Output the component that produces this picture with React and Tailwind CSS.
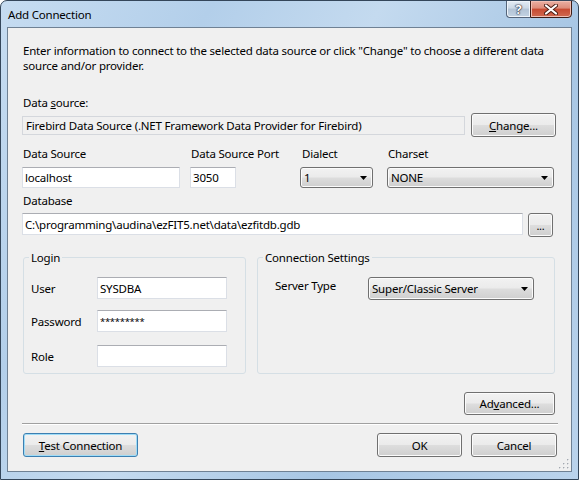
import React from "react";

function Btn({ children, className = "", def = false }) {
  const base =
    "flex items-center justify-center rounded-[3px] border bg-[linear-gradient(to_bottom,#f2f2f2_0%,#ebebeb_48%,#dddddd_52%,#cfcfcf_100%)] leading-[15px] ";
  const edge = def
    ? "border-[#3c7fb1] shadow-[inset_0_0_0_1px_#9fdcf7] "
    : "border-[#707070] shadow-[inset_0_0_0_1px_#fbfbfb] ";
  return <div className={base + edge + className}>{children}</div>;
}

function Field({ children, className = "" }) {
  return (
    <div
      className={
        "flex items-center border border-[#dbdfe6] border-t-[#abadb3] bg-white pl-[2px] leading-[15px] " +
        className
      }
    >
      {children}
    </div>
  );
}

function Arrow() {
  return (
    <svg width="7" height="4" viewBox="0 0 7 4" className="shrink-0">
      <path d="M0 0H7L3.5 4Z" fill="#000" />
    </svg>
  );
}

function Combo({ children, className = "" }) {
  return (
    <div
      className={
        "flex items-center justify-between rounded-[3px] border border-[#707070] bg-[linear-gradient(to_bottom,#f2f2f2_0%,#ebebeb_48%,#dddddd_52%,#cfcfcf_100%)] shadow-[inset_0_0_0_1px_#fbfbfb] pl-[3px] pr-[5px] leading-[15px] " +
        className
      }
    >
      <span>{children}</span>
      <Arrow />
    </div>
  );
}

export default function App() {
  return (
    <div className="relative flex h-[480px] w-[579px] flex-col overflow-hidden rounded-t-[7px] border border-[#34465a] bg-[linear-gradient(120deg,#c6dcf1_0%,#b3cfea_25%,#c4daef_45%,#a7c6e4_70%,#bad3ec_100%)] font-['Noto_Sans',sans-serif] text-[11.5px] tracking-[-0.2px] text-black">
      {/* title bar */}
      <div className="flex h-[26px] shrink-0 items-start">
        <div className="ml-[7px] mt-[6px] leading-[15px] text-[#000]">Add Connection</div>
        <div className="ml-auto mr-[6px] -mt-px flex">
          <div className="flex h-[18px] w-[24px] items-center justify-center rounded-bl-[4px] border border-r-0 border-[#55657a] bg-[linear-gradient(to_bottom,#e4ecf4_0%,#cbd8e5_45%,#b2c3d5_50%,#c3d3e3_100%)] shadow-[inset_0_0_0_1px_#eef4fa]">
            <span className="text-[13px] font-bold leading-none text-white [text-shadow:0_0_1px_#223,0_0_1px_#223,0_0_2px_#334]">?</span>
          </div>
          <div className="flex h-[18px] w-[42px] items-center justify-center rounded-br-[4px] border border-[#3e1d17] bg-[linear-gradient(to_bottom,#eab0a3_0%,#dd8c7a_45%,#c74a31_50%,#d06a51_100%)] shadow-[inset_0_0_0_1px_#f0bfb4]">
            <svg width="14" height="11" viewBox="0 0 14 11">
              <path d="M2 1.5L12 9.5M12 1.5L2 9.5" stroke="#4a1d14" strokeWidth="4" strokeLinecap="round" />
              <path d="M2 1.5L12 9.5M12 1.5L2 9.5" stroke="#ffffff" strokeWidth="2.2" strokeLinecap="round" />
            </svg>
          </div>
        </div>
      </div>

      {/* client area */}
      <div className="relative ml-[6px] flex h-[445px] w-[565px] flex-col border border-[#6f8194] bg-[#f0f0f0] px-[14px]">
        <div className="mt-[15px] whitespace-nowrap pl-[1px] leading-[15px]">
          <div>Enter information to connect to the selected data source or click "Change" to choose a different data</div>
          <div>source and/or provider.</div>
        </div>

        <div className="mt-[22px] pl-[1px] leading-[15px]">
          Data <span className="underline">s</span>ource:
        </div>

        <div className="mt-[3px] flex h-[24px] items-center">
          <div className="flex h-[19px] w-[443px] items-center border border-[#d4d7dc] bg-[#f0f0f0] pl-[3px] leading-[15px]">
            Firebird Data Source (.NET Framework Data Provider for Firebird)
          </div>
          <Btn className="ml-auto mr-[1px] h-[24px] w-[85px]">
            <span>
              <span className="underline">C</span>hange...
            </span>
          </Btn>
        </div>

        <div className="mt-[9px] grid grid-cols-[168px_110px_87px_1fr]">
          <div className="flex flex-col">
            <div className="pl-[1px] leading-[15px]">Data Source</div>
            <Field className="mt-[6px] h-[21px] w-[158px]">localhost</Field>
          </div>
          <div className="flex flex-col">
            <div className="pl-[1px] leading-[15px]">Data Source Port</div>
            <Field className="mt-[6px] h-[21px] w-[46px]">3050</Field>
          </div>
          <div className="flex flex-col">
            <div className="pl-[2px] leading-[15px]">Dialect</div>
            <Combo className="mt-[6px] h-[21px] w-[73px]">1</Combo>
          </div>
          <div className="flex flex-col">
            <div className="pl-[1px] leading-[15px]">Charset</div>
            <Combo className="mt-[6px] h-[21px] w-[167px]">NONE</Combo>
          </div>
        </div>

        <div className="mt-[5px] pl-[1px] leading-[15px]">Database</div>
        <div className="mt-[5px] flex items-start">
          <Field className="h-[22px] w-[501px]">C:\programming\audina\ezFIT5.net\data\ezfitdb.gdb</Field>
          <Btn className="ml-[5px] h-[24px] w-[25px]">
            <span className="text-[11px] leading-none">...</span>
          </Btn>
        </div>

        <div className="mt-[13px] ml-[1px] flex gap-[11px]">
          <fieldset className="h-[124px] w-[223px] rounded-[3px] border border-[#d5dfe5]">
            <legend className="ml-[5px] px-[2px] leading-[15px]">Login</legend>
            <div className="flex flex-col pl-[7px]">
              <div className="mt-[12px] flex items-center">
                <div className="w-[66px] leading-[15px]">User</div>
                <Field className="h-[22px] w-[130px]">SYSDBA</Field>
              </div>
              <div className="mt-[11px] flex items-center">
                <div className="w-[66px] leading-[15px]">Password</div>
                <Field className="h-[22px] w-[130px]">
                  <span className="text-[9.5px] tracking-[-0.3px]">*********</span>
                </Field>
              </div>
              <div className="mt-[13px] flex items-center">
                <div className="w-[66px] leading-[15px]">Role</div>
                <Field className="h-[22px] w-[130px]"></Field>
              </div>
            </div>
          </fieldset>
          <fieldset className="h-[124px] w-[298px] rounded-[3px] border border-[#d5dfe5]">
            <legend className="ml-[5px] px-[2px] leading-[15px]">Connection Settings</legend>
            <div className="mt-[12px] flex items-start pl-[17px]">
              <div className="mt-[1px] w-[93px] leading-[15px]">Server Type</div>
              <Combo className="h-[23px] w-[166px]">Super/Classic Server</Combo>
            </div>
          </fieldset>
        </div>

        <div className="mt-[18px] flex justify-end pr-[2px]">
          <Btn className="h-[23px] w-[91px]">
            <span>
              Ad<span className="underline">v</span>anced...
            </span>
          </Btn>
        </div>

        <div className="mt-[8px] h-[2px] w-[536px] border-t border-b border-t-[#a0a0a0] border-b-white"></div>

        <div className="mt-[8px] flex items-center">
          <Btn def className="ml-[1px] h-[24px] w-[115px]">
            <span>
              <span className="underline">T</span>est Connection
            </span>
          </Btn>
          <Btn className="ml-auto h-[24px] w-[85px]">OK</Btn>
          <Btn className="ml-[9px] h-[24px] w-[86px]">Cancel</Btn>
        </div>

        <svg width="11" height="11" viewBox="0 0 11 11" className="absolute bottom-[2px] right-[2px]">
          {[
            [9, 1],
            [9, 5],
            [5, 5],
            [9, 9],
            [5, 9],
            [1, 9],
          ].map(([x, y], i) => (
            <g key={i}>
              <rect x={x + 0.6} y={y + 0.6} width="1.4" height="1.4" fill="#ffffff" />
              <rect x={x} y={y} width="1.4" height="1.4" fill="#a2a8b0" />
            </g>
          ))}
        </svg>
      </div>
    </div>
  );
}
